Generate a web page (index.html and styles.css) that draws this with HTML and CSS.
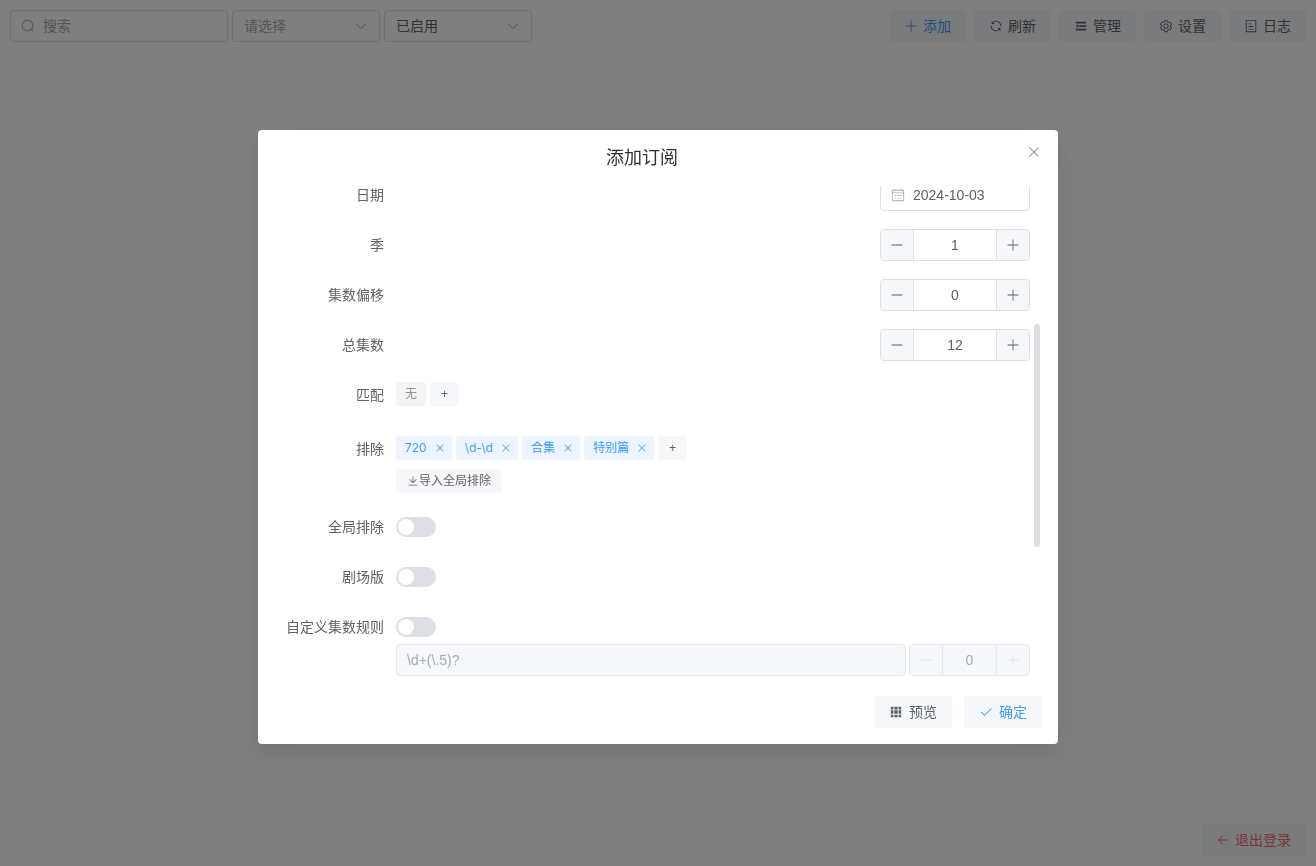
FILE: index.html
```html
<!DOCTYPE html>
<html lang="zh-CN">
<head>
    <meta charset="UTF-8">
    <meta name="viewport" content="width=device-width, initial-scale=1.0">
    <title>添加订阅</title>
    <link rel="stylesheet" href="styles.css">
</head>
<body>

<svg class="sprite" aria-hidden="true">
    <symbol id="search" viewBox="0 0 1024 1024"><path d="m795.904 750.72 124.992 124.928a32 32 0 0 1-45.248 45.248L750.656 795.904a416 416 0 1 1 45.248-45.248zM480 832a352 352 0 1 0 0-704 352 352 0 0 0 0 704"/></symbol>
    <symbol id="arrow-down" viewBox="0 0 1024 1024"><path d="M831.872 340.864 512 652.672 192.128 340.864a30.592 30.592 0 0 0-42.752 0 29.12 29.12 0 0 0 0 41.6L489.664 714.24a32 32 0 0 0 44.672 0l340.288-331.712a29.12 29.12 0 0 0 0-41.728 30.592 30.592 0 0 0-42.752 0z"/></symbol>
    <symbol id="plus" viewBox="0 0 1024 1024"><path d="M480 480V128a32 32 0 0 1 64 0v352h352a32 32 0 1 1 0 64H544v352a32 32 0 1 1-64 0V544H128a32 32 0 0 1 0-64z"/></symbol>
    <symbol id="minus" viewBox="0 0 1024 1024"><path d="M128 544h768a32 32 0 1 0 0-64H128a32 32 0 0 0 0 64"/></symbol>
    <symbol id="refresh" viewBox="0 0 1024 1024"><path d="M771.776 794.88A384 384 0 0 1 128 512h64a320 320 0 0 0 555.712 216.448H654.72a32 32 0 1 1 0-64h149.056a32 32 0 0 1 32 32v148.928a32 32 0 1 1-64 0v-50.56zM276.288 295.616h92.992a32 32 0 0 1 0 64H220.16a32 32 0 0 1-32-32V178.56a32 32 0 0 1 64 0v50.56A384 384 0 0 1 896.128 512h-64a320 320 0 0 0-555.776-216.384z"/></symbol>
    <symbol id="fold" viewBox="0 0 1024 1024"><path d="M896 192H128v128h768zm0 256H384v128h512zm0 256H128v128h768zM320 384 128 512l192 128z"/></symbol>
    <symbol id="setting" viewBox="0 0 1024 1024"><path d="M600.704 64a32 32 0 0 1 30.464 22.208l35.2 109.376c14.784 7.232 28.928 15.36 42.432 24.512l112.384-24.192a32 32 0 0 1 34.432 15.36L944.32 364.8a32 32 0 0 1-4.032 37.504l-77.12 85.12a357.12 357.12 0 0 1 0 49.024l77.12 85.248a32 32 0 0 1 4.032 37.504l-88.704 153.6a32 32 0 0 1-34.432 15.296L708.8 803.904c-13.44 9.088-27.648 17.28-42.368 24.512l-35.264 109.376A32 32 0 0 1 600.704 960H423.296a32 32 0 0 1-30.464-22.208L357.696 828.48a351.616 351.616 0 0 1-42.56-24.64l-112.32 24.256a32 32 0 0 1-34.432-15.36L79.68 659.2a32 32 0 0 1 4.032-37.504l77.12-85.248a357.12 357.12 0 0 1 0-48.896l-77.12-85.248A32 32 0 0 1 79.68 364.8l88.704-153.6a32 32 0 0 1 34.432-15.296l112.32 24.256c13.568-9.152 27.776-17.408 42.56-24.64l35.2-109.312A32 32 0 0 1 423.232 64H600.64zm-23.424 64H446.72l-36.352 113.088-24.512 11.968a294.113 294.113 0 0 0-34.816 20.096l-22.656 15.36-116.224-25.088-65.28 113.152 79.68 88.192-1.92 27.136a293.12 293.12 0 0 0 0 40.192l1.92 27.136-79.808 88.192 65.344 113.152 116.224-25.024 22.656 15.296a294.113 294.113 0 0 0 34.816 20.096l24.512 11.968L446.72 896h130.688l36.48-113.152 24.448-11.904a288.282 288.282 0 0 0 34.752-20.096l22.592-15.296 116.288 25.024 65.28-113.152-79.744-88.192 1.92-27.136a293.12 293.12 0 0 0 0-40.256l-1.92-27.136 79.808-88.128-65.344-113.152-116.288 24.96-22.592-15.232a287.616 287.616 0 0 0-34.752-20.096l-24.448-11.904L577.344 128zM512 320a192 192 0 1 1 0 384 192 192 0 0 1 0-384m0 64a128 128 0 1 0 0 256 128 128 0 0 0 0-256"/></symbol>
    <symbol id="tickets" viewBox="0 0 1024 1024"><path d="M192 128v768h640V128zm-32-64h704a32 32 0 0 1 32 32v832a32 32 0 0 1-32 32H160a32 32 0 0 1-32-32V96a32 32 0 0 1 32-32m160 448h384v64H320zm0-192h192v64H320zm0 384h384v64H320z"/></symbol>
    <symbol id="back" viewBox="0 0 1024 1024"><path d="M224 480h640a32 32 0 1 1 0 64H224a32 32 0 0 1 0-64"/><path d="m237.248 512 265.408 265.344a32 32 0 0 1-45.312 45.312l-288-288a32 32 0 0 1 0-45.312l288-288a32 32 0 1 1 45.312 45.312z"/></symbol>
    <symbol id="close" viewBox="0 0 1024 1024"><path d="M764.288 214.592 512 466.88 259.712 214.592a31.936 31.936 0 0 0-45.12 45.12L466.752 512 214.528 764.224a31.936 31.936 0 1 0 45.12 45.184L512 557.184l252.288 252.288a31.936 31.936 0 0 0 45.12-45.12L557.12 512.064l252.288-252.352a31.936 31.936 0 1 0-45.12-45.184z"/></symbol>
    <symbol id="check" viewBox="0 0 1024 1024"><path d="M406.656 706.944 195.84 496.256a32 32 0 1 0-45.248 45.248l256 256 512-512a32 32 0 0 0-45.248-45.248L406.592 706.944z"/></symbol>
    <symbol id="grid" viewBox="0 0 1024 1024"><path d="M640 384v256H384V384zm64 0h192v256H704zm-64 512H384V704h256zm64 0V704h192v192zm-64-768v192H384V128zm64 0h192v192H704zM320 384v256H128V384zm0 512H128V704h192zm0-768v192H128V128z"/></symbol>
    <symbol id="download" viewBox="0 0 1024 1024"><path d="M160 832h704a32 32 0 1 1 0 64H160a32 32 0 1 1 0-64m384-253.696 236.288-236.352 45.248 45.248L508.8 704 192 387.2l45.248-45.248L480 584.704V128h64z"/></symbol>
    <symbol id="calendar" viewBox="0 0 1024 1024"><path d="M128 384v512h768V192H768v32a32 32 0 1 1-64 0v-32H320v32a32 32 0 0 1-64 0v-32H128v128h768v64zm192-256h384V96a32 32 0 1 1 64 0v32h160a32 32 0 0 1 32 32v768a32 32 0 0 1-32 32H96a32 32 0 0 1-32-32V160a32 32 0 0 1 32-32h160V96a32 32 0 0 1 64 0zm-32 384h64a32 32 0 0 1 0 64h-64a32 32 0 0 1 0-64m0 192h64a32 32 0 1 1 0 64h-64a32 32 0 1 1 0-64m192-192h64a32 32 0 0 1 0 64h-64a32 32 0 0 1 0-64m0 192h64a32 32 0 1 1 0 64h-64a32 32 0 1 1 0-64m192-192h64a32 32 0 1 1 0 64h-64a32 32 0 1 1 0-64m0 192h64a32 32 0 1 1 0 64h-64a32 32 0 1 1 0-64"/></symbol>
</svg>

<div class="page">
    <header class="toolbar">
        <div class="filters">
            <div class="input search-input">
                <svg class="icon"><use href="#search"/></svg>
                <input type="text" placeholder="搜索" aria-label="搜索">
            </div>
            <div class="select">
                <select class="empty" aria-label="请选择"><option>请选择</option></select>
                <svg class="icon"><use href="#arrow-down"/></svg>
            </div>
            <div class="select">
                <select aria-label="状态"><option>已启用</option></select>
                <svg class="icon"><use href="#arrow-down"/></svg>
            </div>
        </div>
        <div class="actions">
            <button class="btn primary"><svg class="icon"><use href="#plus"/></svg>添加</button>
            <button class="btn"><svg class="icon"><use href="#refresh"/></svg>刷新</button>
            <button class="btn"><svg class="icon"><use href="#fold"/></svg>管理</button>
            <button class="btn"><svg class="icon"><use href="#setting"/></svg>设置</button>
            <button class="btn"><svg class="icon"><use href="#tickets"/></svg>日志</button>
        </div>
    </header>
    <footer class="page-footer">
        <button class="btn danger"><svg class="icon"><use href="#back"/></svg>退出登录</button>
    </footer>
</div>

<div class="overlay">
    <div class="dialog" role="dialog" aria-modal="true" aria-labelledby="dialogTitle">
        <div class="dialog-header">
            <h1 id="dialogTitle">添加订阅</h1>
            <button class="dialog-close" aria-label="关闭"><svg class="icon"><use href="#close"/></svg></button>
        </div>

        <div class="dialog-body">
            <form class="form">
                <div class="form-item">
                    <label for="date">日期</label>
                    <div class="content end">
                        <div class="input date-input">
                            <svg class="icon"><use href="#calendar"/></svg>
                            <input type="text" id="date" value="2024-10-03">
                        </div>
                    </div>
                </div>
                <div class="form-item">
                    <label for="season">季</label>
                    <div class="content end">
                        <div class="number">
                            <button type="button" aria-label="减少"><svg class="icon"><use href="#minus"/></svg></button>
                            <input type="text" id="season" value="1">
                            <button type="button" aria-label="增加"><svg class="icon"><use href="#plus"/></svg></button>
                        </div>
                    </div>
                </div>
                <div class="form-item">
                    <label for="offset">集数偏移</label>
                    <div class="content end">
                        <div class="number">
                            <button type="button" aria-label="减少"><svg class="icon"><use href="#minus"/></svg></button>
                            <input type="text" id="offset" value="0">
                            <button type="button" aria-label="增加"><svg class="icon"><use href="#plus"/></svg></button>
                        </div>
                    </div>
                </div>
                <div class="form-item">
                    <label for="total">总集数</label>
                    <div class="content end">
                        <div class="number">
                            <button type="button" aria-label="减少"><svg class="icon"><use href="#minus"/></svg></button>
                            <input type="text" id="total" value="12">
                            <button type="button" aria-label="增加"><svg class="icon"><use href="#plus"/></svg></button>
                        </div>
                    </div>
                </div>
                <div class="form-item">
                    <label for="addMatch">匹配</label>
                    <div class="content tag-content">
                        <div class="tags">
                            <span class="tag info">无</span>
                            <button type="button" id="addMatch" class="btn small">+</button>
                        </div>
                    </div>
                </div>
                <div class="form-item">
                    <label for="addExclude">排除</label>
                    <div class="content tag-content">
                        <div class="tags">
                            <span class="tag">720<button type="button" aria-label="移除"><svg class="icon"><use href="#close"/></svg></button></span>
                            <span class="tag">\d-\d<button type="button" aria-label="移除"><svg class="icon"><use href="#close"/></svg></button></span>
                            <span class="tag">合集<button type="button" aria-label="移除"><svg class="icon"><use href="#close"/></svg></button></span>
                            <span class="tag">特别篇<button type="button" aria-label="移除"><svg class="icon"><use href="#close"/></svg></button></span>
                            <button type="button" id="addExclude" class="btn small">+</button>
                        </div>
                        <button type="button" class="btn small import"><svg class="icon"><use href="#download"/></svg>导入全局排除</button>
                    </div>
                </div>
                <div class="form-item">
                    <label for="globalExclude">全局排除</label>
                    <div class="content"><input type="checkbox" class="switch" id="globalExclude"></div>
                </div>
                <div class="form-item">
                    <label for="ova">剧场版</label>
                    <div class="content"><input type="checkbox" class="switch" id="ova"></div>
                </div>
                <div class="form-item">
                    <label for="customEpisode">自定义集数规则</label>
                    <div class="content custom-rule">
                        <div class="content"><input type="checkbox" class="switch" id="customEpisode"></div>
                        <div class="rule-row">
                            <div class="input disabled">
                                <input type="text" value="\d+(\.5)?" aria-label="集数规则" disabled>
                            </div>
                            <div class="number narrow disabled">
                                <button type="button" aria-label="减少" disabled><svg class="icon"><use href="#minus"/></svg></button>
                                <input type="text" value="0" aria-label="分组" disabled>
                                <button type="button" aria-label="增加" disabled><svg class="icon"><use href="#plus"/></svg></button>
                            </div>
                        </div>
                    </div>
                </div>
            </form>
            <div class="scroll-thumb"></div>
        </div>

        <div class="dialog-footer">
            <button class="btn"><svg class="icon"><use href="#grid"/></svg>预览</button>
            <button class="btn primary"><svg class="icon"><use href="#check"/></svg>确定</button>
        </div>
    </div>
</div>

</body>
</html>
```
FILE: styles.css
```css
* {
    box-sizing: border-box;
}

body {
    margin: 0;
    font-family: "Liberation Sans", "Noto Sans CJK SC", sans-serif;
    font-size: 14px;
    color: #606266;
    background-color: #fff;
}

input,
button,
select {
    font-family: inherit;
    font-size: 14px;
    color: #606266;
}

button,
select {
    cursor: pointer;
}

.sprite {
    display: none;
}

.icon {
    width: 14px;
    height: 14px;
    flex: none;
    fill: currentColor;
}

.page {
    display: flex;
    flex-direction: column;
    justify-content: space-between;
    min-height: 100vh;
    padding: 10px;
}

.toolbar {
    display: flex;
    justify-content: space-between;
}

.filters {
    display: flex;
    gap: 4px;
}

.actions {
    display: flex;
    gap: 8px;
}

.page-footer {
    display: flex;
    justify-content: flex-end;
}

/* buttons */
.btn {
    display: inline-flex;
    align-items: center;
    justify-content: center;
    gap: 6px;
    height: 32px;
    padding: 0 15px;
    border: none;
    border-radius: 4px;
    background-color: #f5f7fa;
    line-height: 14px;
}

.page .btn {
    gap: 5px;
}

.btn.primary {
    color: #409eff;
}

.btn.danger {
    color: #f56c6c;
}

.btn.small {
    height: 24px;
    padding: 0 11px;
    font-size: 12px;
}

.btn.import {
    gap: 0;
}

.btn.import .icon {
    width: 12px;
    height: 12px;
}

/* inputs */
.input {
    display: flex;
    align-items: center;
    gap: 8px;
    height: 32px;
    padding: 0 10px;
    border: 1px solid #dcdfe6;
    border-radius: 4px;
    background-color: #fff;
}

.input .icon {
    color: #a8abb2;
}

.input input {
    flex: 1;
    min-width: 0;
    padding: 0;
    border: none;
    outline: none;
    background: none;
}

.input input::placeholder {
    color: #a8abb2;
}

.search-input {
    width: 218px;
}

.date-input {
    width: 150px;
}

.select {
    position: relative;
    width: 148px;
}

.select select {
    width: 100%;
    height: 32px;
    padding: 0 11px;
    border: 1px solid #dcdfe6;
    border-radius: 4px;
    background-color: #fff;
    appearance: none;
}

.select select.empty {
    color: #a8abb2;
}

.select .icon {
    position: absolute;
    right: 12px;
    top: 9px;
    color: #a8abb2;
    pointer-events: none;
}

.number {
    display: flex;
    width: 150px;
    height: 32px;
    border: 1px solid #dcdfe6;
    border-radius: 4px;
    overflow: hidden;
}

.number button {
    display: flex;
    align-items: center;
    justify-content: center;
    width: 32px;
    padding: 0;
    border: none;
    background-color: #f5f7fa;
}

.number input {
    flex: 1;
    min-width: 0;
    padding: 0;
    border: solid #dcdfe6;
    border-width: 0 1px;
    background: none;
    text-align: center;
}

.number.narrow {
    width: 121px;
}

.disabled,
.disabled input {
    border-color: #e4e7ed;
    background-color: #f5f7fa;
}

.disabled input {
    color: #a8abb2;
}

.disabled button {
    color: #dcdfe6;
}

.switch {
    appearance: none;
    width: 40px;
    height: 20px;
    margin: 0;
    padding: 2px;
    border-radius: 10px;
    background-color: #dcdfe6;
    cursor: pointer;
}

.switch::before {
    content: "";
    display: block;
    width: 16px;
    height: 16px;
    border-radius: 50%;
    background-color: #fff;
}

.switch:checked {
    background-color: #409eff;
}

.switch:checked::before {
    margin-left: auto;
}

/* dialog */
.overlay {
    position: fixed;
    inset: 0;
    overflow: auto;
    background-color: rgba(0, 0, 0, 0.5);
}

.dialog {
    width: 800px;
    max-width: 100%;
    margin: 15vh auto 50px;
    padding: 16px;
    border-radius: 4px;
    background-color: #fff;
    box-shadow: 0 12px 32px 4px rgba(0, 0, 0, 0.04), 0 8px 20px rgba(0, 0, 0, 0.08);
    position: relative;
}

.dialog-header {
    padding: 0 32px 16px 0;
    text-align: center;
}

.dialog-header h1 {
    margin: 0;
    font-size: 18px;
    font-weight: normal;
    line-height: 24px;
    color: #303133;
}

.dialog-close {
    position: absolute;
    top: 0;
    right: 0;
    display: flex;
    align-items: center;
    justify-content: center;
    width: 48px;
    height: 44px;
    padding: 0;
    border: none;
    background: none;
    color: #909399;
}

.dialog-close .icon {
    width: 16px;
    height: 16px;
}

.dialog-body {
    position: relative;
    overflow: hidden;
}

.form {
    display: flex;
    flex-direction: column;
    gap: 18px;
    margin-top: -7px;
    padding: 0 12px 4px 0;
}

.form-item {
    display: flex;
}

.form-item label {
    width: 122px;
    flex: none;
    padding-right: 12px;
    line-height: 32px;
    text-align: right;
}

.content {
    display: flex;
    flex: 1;
    align-items: center;
    min-height: 32px;
}

.content.end {
    justify-content: flex-end;
}

.content.tag-content {
    flex-direction: column;
    align-items: flex-start;
    gap: 9px;
    min-height: 36px;
    padding-top: 3px;
}

.content.custom-rule {
    flex-direction: column;
    align-items: stretch;
    gap: 1px;
}

.tags {
    display: flex;
    gap: 4px;
}

.tag {
    display: inline-flex;
    align-items: center;
    gap: 6px;
    height: 24px;
    padding: 0 5px 0 9px;
    border-radius: 4px;
    background-color: #ecf5ff;
    color: #409eff;
    font-family: Inter, "Noto Sans CJK SC", sans-serif;
    font-size: 12px;
    line-height: 24px;
}

.tag.info {
    padding: 0 9px;
    background-color: #f4f4f5;
    color: #909399;
}

.tag button {
    display: flex;
    padding: 1px;
    border: none;
    background: none;
    color: inherit;
}

.tag .icon {
    width: 12px;
    height: 12px;
}

.rule-row {
    display: flex;
    gap: 3px;
}

.rule-row .input {
    flex: 1;
}

.scroll-thumb {
    position: absolute;
    top: 138px;
    right: 2px;
    width: 6px;
    height: 223px;
    border-radius: 3px;
    background-color: #dddee0;
}

.dialog-footer {
    display: flex;
    justify-content: flex-end;
    gap: 12px;
    padding-top: 16px;
}
```
